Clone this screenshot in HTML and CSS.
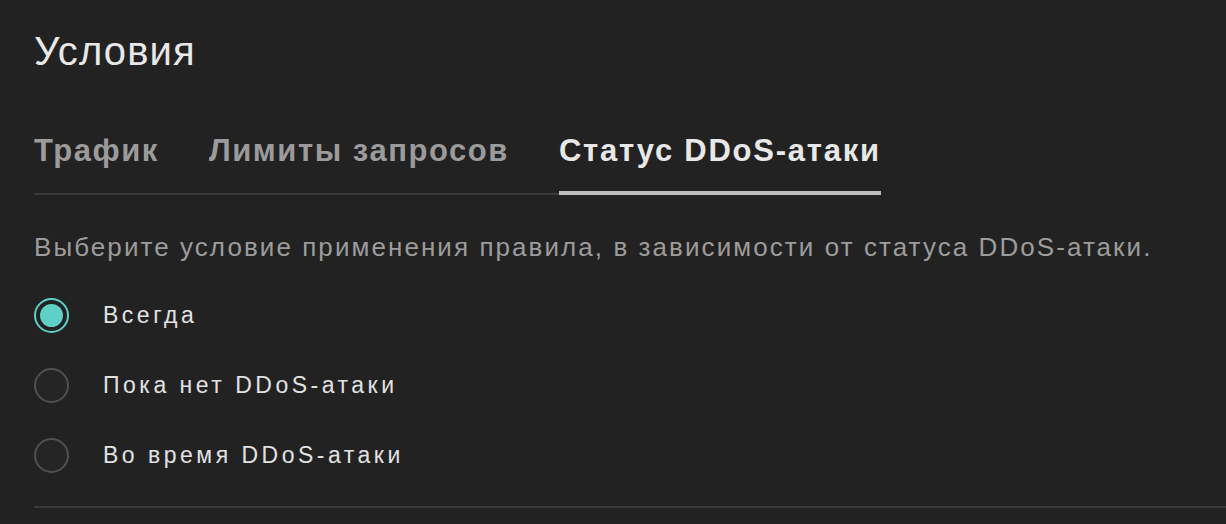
FILE: index.html
```html
<!DOCTYPE html>
<html lang="ru">
<head>
<meta charset="utf-8">
<title>Условия</title>
<link rel="stylesheet" href="styles.css">
</head>
<body>
<main class="panel">
  <h1 class="title">Условия</h1>
  <nav class="tabs">
    <span class="tab">Трафик</span>
    <span class="tab">Лимиты запросов</span>
    <span class="tab tab-active">Статус DDoS-атаки</span>
  </nav>
  <p class="hint">Выберите условие применения правила, в зависимости от статуса DDoS-атаки.</p>
  <div class="options">
    <label class="option">
      <span class="radio radio-checked"></span>
      <span class="option-text">Всегда</span>
    </label>
    <label class="option">
      <span class="radio"></span>
      <span class="option-text">Пока нет DDoS-атаки</span>
    </label>
    <label class="option">
      <span class="radio"></span>
      <span class="option-text">Во время DDoS-атаки</span>
    </label>
  </div>
  <div class="divider"></div>
</main>
</body>
</html>
```

FILE: styles.css
```css
html, body {
  margin: 0;
  padding: 0;
  background: #222222;
  overflow: hidden;
}

.panel {
  padding: 27px 0 0 34px;
  font-family: "Liberation Sans", Arial, sans-serif;
  color: #e6e6e6;
}

.title {
  margin: 0;
  font-size: 40px;
  line-height: 48px;
  font-weight: 400;
  letter-spacing: 1.1px;
  color: #e8e8e8;
}

.tabs {
  display: inline-flex;
  margin-top: 58px;
  border-bottom: 2px solid #3a3a3a;
}

.tab {
  font-size: 31px;
  line-height: 36px;
  font-weight: 700;
  letter-spacing: 1.55px;
  color: #9b9b9b;
  padding: 0 50px 24px 0;
}

.tab-active {
  color: #e8e8e8;
  padding-right: 0;
  letter-spacing: 1.75px;
  border-bottom: 4px solid #bdbdbd;
  margin-bottom: -2px;
  padding-bottom: 22px;
}

.hint {
  margin: 36px 0 0;
  font-size: 26px;
  line-height: 32px;
  letter-spacing: 2.07px;
  color: #9c9c9c;
}

.options {
  margin-top: 17px;
  display: flex;
  flex-direction: column;
}

.option {
  height: 70px;
  display: flex;
  align-items: center;
  gap: 34px;
}

.radio {
  box-sizing: border-box;
  width: 35px;
  height: 35px;
  border-radius: 50%;
  border: 2px solid #505050;
  background: #252525;
  display: flex;
  align-items: center;
  justify-content: center;
  flex: none;
}

.radio-checked {
  border-color: #5fd0c8;
  background: #222222;
}

.radio-checked::after {
  content: "";
  width: 23px;
  height: 23px;
  border-radius: 50%;
  background: #5fd0c8;
}

.option-text {
  font-size: 23px;
  line-height: 28px;
  letter-spacing: 3.5px;
  color: #e2e2e2;
}

.divider {
  margin-top: 16px;
  height: 2px;
  background: #3a3a3a;
}
```
